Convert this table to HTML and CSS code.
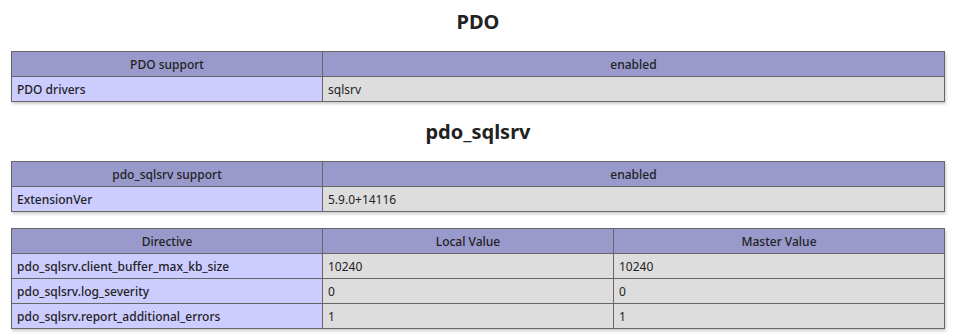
FILE: index.html
```html
<!DOCTYPE html>
<html>
<head>
<meta charset="utf-8">
<link rel="stylesheet" href="styles.css">
</head>
<body>
<div class="center">
<h2 class="first">PDO</h2>
<table>
<tr class="h"><th class="c1">PDO support</th><th>enabled</th></tr>
<tr><td class="e">PDO drivers </td><td class="v">sqlsrv </td></tr>
</table>
<h2>pdo_sqlsrv</h2>
<table>
<tr class="h"><th class="c1">pdo_sqlsrv support</th><th>enabled</th></tr>
<tr><td class="e">ExtensionVer </td><td class="v">5.9.0+14116 </td></tr>
</table>
<table>
<tr class="h"><th class="c1">Directive</th><th class="c2">Local Value</th><th>Master Value</th></tr>
<tr><td class="e">pdo_sqlsrv.client_buffer_max_kb_size</td><td class="v">10240</td><td class="v">10240</td></tr>
<tr><td class="e">pdo_sqlsrv.log_severity</td><td class="v">0</td><td class="v">0</td></tr>
<tr><td class="e">pdo_sqlsrv.report_additional_errors</td><td class="v">1</td><td class="v">1</td></tr>
</table>
</div>
</body>
</html>
```
FILE: styles.css
```css
body {
  margin: 0;
  background: #fff;
  color: #222;
  font-family: "Noto Sans", "Noto Sans CJK KR", sans-serif;
}
.center { text-align: center; }
h2 {
  font-size: 20px;
  font-weight: bold;
  margin: 16px 0;
  line-height: 27px;
}
h2.first { margin-top: 8px; }
table {
  border-collapse: collapse;
  border: 0;
  width: 934px;
  margin: 16px auto;
  text-align: left;
  box-shadow: 1px 2px 3px #ccc;
}
td, th {
  border: 1px solid #666;
  font-size: 12px;
  line-height: 16px;
  vertical-align: baseline;
  padding: 5px 5px 3px;
}
th { text-align: center; font-weight: 500; }
.h { background: #99c; }
.c1 { width: 300px; }
.c2 { width: 280px; }
.e { background: #ccf; width: 300px; font-weight: 500; }
.v { background: #ddd; }
```
